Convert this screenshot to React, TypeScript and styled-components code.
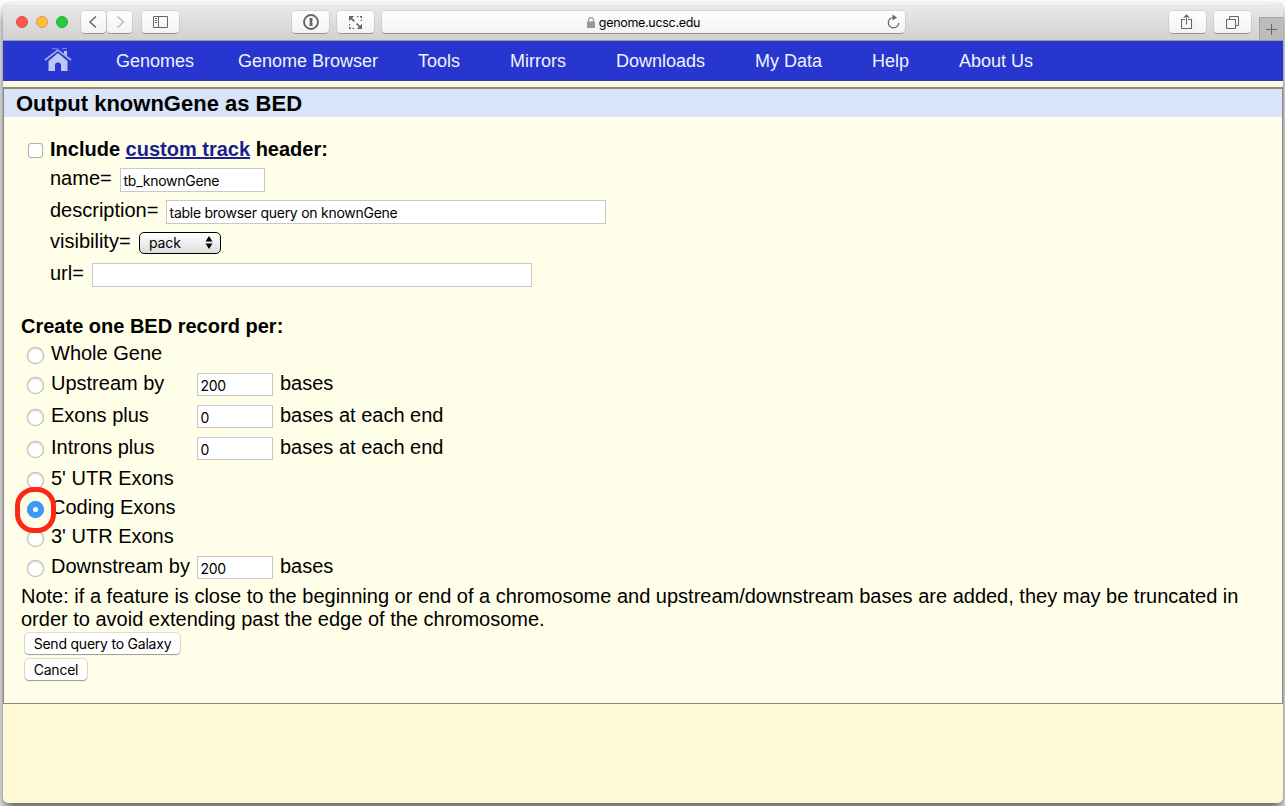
import React from "react";
import styled, { createGlobalStyle } from "styled-components";

const GlobalStyle = createGlobalStyle`
  * { box-sizing: border-box; }
  html, body { margin: 0; height: 100%; overflow: hidden; }
  body { background: #fff; font-family: "Liberation Sans", Arial, sans-serif; color: #000; }
`;

const Desktop = styled.div`
  height: 806px;
  padding: 3px 2px 3px 3px;
  overflow: hidden;
`;

const Window = styled.div`
  height: 800px;
  border-radius: 5px;
  overflow: hidden;
  display: flex;
  flex-direction: column;
  background: #fff8d7;
  box-shadow: 0 0 1px rgba(0, 0, 0, 0.4), 0 9px 14px rgba(0, 0, 0, 0.6);
`;

const Toolbar = styled.div`
  height: 38px;
  flex: none;
  display: flex;
  align-items: center;
  padding-left: 13px;
  background: linear-gradient(#ebeaeb, #d2d1d2);
  border-top: 1px solid #f6f6f6;
  border-bottom: 1px solid #9c9c9c;
`;

const Light = styled.span<{ $color: string; $edge: string }>`
  width: 12px;
  height: 12px;
  margin-right: 8px;
  border-radius: 50%;
  background: ${(p) => p.$color};
  border: 1px solid ${(p) => p.$edge};
`;

const ToolButton = styled.span<{ $width: number; $before: number }>`
  width: ${(p) => p.$width}px;
  margin-left: ${(p) => p.$before}px;
  height: 22px;
  flex: none;
  display: flex;
  align-items: center;
  justify-content: center;
  border-radius: 4px;
  background: linear-gradient(#fefefe, #f3f3f3);
  box-shadow: 0 0 0 0.5px rgba(0, 0, 0, 0.14), 0 1px 0.5px rgba(0, 0, 0, 0.25);
`;

const Address = styled(ToolButton)`
  position: relative;
  font: 12.5px Inter, sans-serif;
  letter-spacing: -0.3px;
  gap: 4px;
`;

const Reload = styled.svg`
  position: absolute;
  right: 5px;
  top: 3px;
`;

const NewTab = styled.span`
  width: 24px;
  height: 23px;
  margin-left: auto;
  align-self: flex-end;
  display: flex;
  align-items: center;
  justify-content: center;
  background: #bdbcbd;
  border-left: 1px solid #a3a3a3;
  border-top: 1px solid #a3a3a3;
`;

const Nav = styled.nav`
  height: 40px;
  flex: none;
  display: flex;
  padding-left: 41px;
  background: #2636cf;
  color: #f1f2fc;
  font-size: 18px;
  line-height: 40px;
`;

const HomeLink = styled.span`
  width: 72px;
  padding-top: 7px;
  line-height: 0;
`;

const NavItem = styled.span<{ $width: number }>`
  width: ${(p) => p.$width}px;
  white-space: nowrap;
`;

const Panel = styled.main`
  height: 617px;
  margin-top: 6px;
  flex: none;
  background: #fffee8;
  border: 1px solid #888;
  border-top-width: 2px;
`;

const Title = styled.h1`
  margin: 0;
  height: 28px;
  padding-left: 12px;
  background: #d9e4f8;
  font-size: 22px;
  line-height: 30px;
`;

const Form = styled.div`
  padding: 21px 0 0 17px;
  font-size: 20px;
  line-height: 22px;
`;

const Row = styled.div<{ $height: number }>`
  height: ${(p) => p.$height}px;
  display: flex;
  align-items: flex-start;
  white-space: pre;
`;

const Marker = styled.span<{ $width?: number }>`
  width: ${(p) => p.$width ?? 29}px;
  flex: none;
  padding: 5px 0 0 6px;
  position: relative;
`;

const Check = styled.span`
  display: block;
  width: 15px;
  height: 15px;
  margin-left: 1px;
  background: #fff;
  border: 1px solid #b4b4b0;
  border-radius: 3px;
  box-shadow: 0 0 1px rgba(0, 0, 0, 0.2);
`;

const Radio = styled.span<{ $on?: boolean }>`
  display: flex;
  align-items: center;
  justify-content: center;
  width: 17px;
  height: 17px;
  border-radius: 50%;
  background: ${(p) => (p.$on ? "#3b99fc" : "#fff")};
  border: 1px solid ${(p) => (p.$on ? "#3f93ec" : "#bdbdb8")};
  box-shadow: 0 0 1px rgba(0, 0, 0, 0.25)${(p) => (p.$on ? "" : ", inset 0 1px 1px rgba(0, 0, 0, 0.16)")};
  &::after {
    content: "";
    width: 5px;
    height: 5px;
    border-radius: 50%;
    background: #fff;
  }
`;

const Highlight = styled.span`
  position: absolute;
  z-index: 1;
  left: -6px;
  top: -9px;
  width: 41px;
  height: 46px;
  border: 5px solid #fe2713;
  border-radius: 19px;
`;

const Label = styled.span<{ $width?: number }>`
  width: ${(p) => (p.$width ? p.$width + "px" : "auto")};
  flex: none;
`;

const Anchor = styled.a`
  color: #181f90;
  text-decoration: underline;
`;

const Field = styled.span<{ $width: number; $height: number }>`
  width: ${(p) => p.$width}px;
  height: ${(p) => p.$height}px;
  margin-top: 1px;
  padding: 1px 0 0 2.5px;
  flex: none;
  background: #fff;
  border: 1px solid #c8c8c8;
  font: 14px/21px Inter, sans-serif;
  letter-spacing: -0.26px;
`;

const Select = styled.span`
  width: 82px;
  height: 22px;
  margin-top: 2px;
  padding: 0 7px 1px 9px;
  display: flex;
  align-items: center;
  justify-content: space-between;
  border: 1px solid #000;
  border-radius: 5px;
  background: linear-gradient(#fff, #dedede);
  font: 14px/19px Inter, sans-serif;
  letter-spacing: -0.1px;
`;

const Unit = styled.span`
  margin-left: 7px;
`;

const Note = styled.p`
  margin: 0;
  line-height: 23px;
  white-space: pre;
`;

const PushButton = styled.span<{ $width: number }>`
  display: flex;
  align-items: center;
  justify-content: center;
  width: ${(p) => p.$width}px;
  height: 21px;
  margin: 2px 0 5px 4px;
  border-radius: 4px;
  background: #fff;
  box-shadow: 0 0 0 1px rgba(0, 0, 0, 0.13), 0 1px 1px rgba(0, 0, 0, 0.3);
  font: 14px Inter, sans-serif;
  letter-spacing: -0.22px;
`;

const navItems: [string, number][] = [
  ["Genomes", 122],
  ["Genome Browser", 180],
  ["Tools", 92],
  ["Mirrors", 106],
  ["Downloads", 139],
  ["My Data", 117],
  ["Help", 87],
  ["About Us", 90],
];

type Option = { label: string; height: number; value?: string; unit?: string; on?: boolean };
const options: Option[] = [
  { label: "Whole Gene", height: 30 },
  { label: "Upstream by", height: 32, value: "200", unit: "bases" },
  { label: "Exons plus", height: 32, value: "0", unit: "bases at each end" },
  { label: "Introns plus", height: 31, value: "0", unit: "bases at each end" },
  { label: "5' UTR Exons", height: 29 },
  { label: "Coding Exons", height: 29, on: true },
  { label: "3' UTR Exons", height: 30 },
  { label: "Downstream by", height: 30, value: "200", unit: "bases" },
];

const line = { fill: "none", stroke: "#666", strokeWidth: 1.2 };

export default function App() {
  return (
    <Desktop>
      <GlobalStyle />
      <Window>
        <Toolbar>
          <Light $color="#fc5753" $edge="#df4744" />
          <Light $color="#fdbc40" $edge="#de9f34" />
          <Light $color="#29c940" $edge="#20ad32" />
          <ToolButton $width={25} $before={5}>
            <svg width="12" height="14" viewBox="0 0 12 14"><path d="M8 1.500 2 7l6 5.500" {...line} strokeWidth={1.500} /></svg>
          </ToolButton>
          <ToolButton $width={25} $before={1}>
            <svg width="10" height="14" viewBox="0 0 10 14"><path d="M2.500 1.500 8.500 7l-6 5.500" {...line} stroke="#bbb" strokeWidth={1.500} /></svg>
          </ToolButton>
          <ToolButton $width={37} $before={10}>
            <svg width="15" height="12" viewBox="0 0 15 12"><path d="M.5.5h14v11H.5zM5.500.5v11M2 2.500h2M2 4.500h2M2 6.500h2" {...line} strokeWidth={1} /></svg>
          </ToolButton>
          <ToolButton $width={37} $before={113}>
            <svg width="16" height="16" viewBox="0 0 16 16">
              <circle cx="8" cy="8" r="7" {...line} strokeWidth={1.900} />
              <path d="M6.500 4h3v3.200l-.7.8.7.8V12h-3V8.800l.7-.8-.7-.8z" fill="#666" />
            </svg>
          </ToolButton>
          <ToolButton $width={37} $before={8}>
            <svg width="13" height="13" viewBox="0 0 13 13">
              <path d="M8 .6h1.500M11 .6h1.400V2M12.400 3.500V5M.6 8v1.500M.6 11v1.400H2M3.500 12.400H5" {...line} />
              <path d="M2 2l3.300 3.300M7.700 7.700 11 11" {...line} strokeWidth={1.700} />
              <path d="M0 0h5.200L0 5.200zM13 13H7.800L13 7.800z" fill="#666" />
            </svg>
          </ToolButton>
          <Address $width={523} $before={8}>
            <svg width="8" height="11" viewBox="0 0 8 11">
              <path d="M0 4.500h8V11H0z" fill="#999" />
              <path d="M1.600 5V2.800a2.400 2.200 0 0 1 4.800 0V5" fill="none" stroke="#999" strokeWidth="1.100" />
            </svg>
            <span>genome.ucsc.edu</span>
            <Reload width="14" height="15" viewBox="0 0 14 15">
              <path d="M7.500 3.500a5.200 5.200 0 1 0 5.200 5.200" {...line} />
              <path d="M6.500.5 11 3.500 6.500 6.500z" fill="#666" />
            </Reload>
          </Address>
          <ToolButton $width={37} $before={264}>
            <svg width="13" height="16" viewBox="0 0 13 16"><path d="M4 5.500H.5v9h10v-9H7M5.500 10.500V1M2.800 3.700 5.500 1l2.700 2.700" {...line} strokeWidth={1.100} /></svg>
          </ToolButton>
          <ToolButton $width={37} $before={8}>
            <svg width="13" height="13" viewBox="0 0 13 13"><path d="M.5 3.500h9v9h-9zM3.500 3V.5h9v9H10" {...line} strokeWidth={1} /></svg>
          </ToolButton>
          <NewTab>
            <svg width="11" height="11" viewBox="0 0 11 11"><path d="M5.500 0v11M0 5.500h11" {...line} strokeWidth={1} /></svg>
          </NewTab>
        </Toolbar>
        <Nav>
          <HomeLink>
            <svg width="28" height="24" viewBox="0 0 28 24">
              <path d="M4.500 13 14 5l9.500 8v10H17v-6a3 2.500 0 0 0-6 0v6H4.500z" fill="#c0c5f2" />
              <path d="M1 12 14 2.200 27 12" fill="none" stroke="#a9b0ee" strokeWidth="1.600" />
              <path d="M20 3h3v5l-3-2.200z" fill="#c0c5f2" />
              <path d="M8 .8h6M18 .8h5" stroke="#8b94e6" />
            </svg>
          </HomeLink>
          {navItems.map(([name, width]) => (
            <NavItem key={name} $width={width}>{name}</NavItem>
          ))}
        </Nav>
        <Panel>
          <Title>Output knownGene as BED</Title>
          <Form>
            <Row $height={29}>
              <Marker><Check /></Marker>
              <b>Include <Anchor>custom track</Anchor> header:</b>
            </Row>
            <Row $height={32}>
              <Marker />
              <Label $width={70}>name=</Label>
              <Field $width={145} $height={24}>tb_knownGene</Field>
            </Row>
            <Row $height={31}>
              <Marker />
              <Label $width={116}>description=</Label>
              <Field $width={440} $height={24}>table browser query on knownGene</Field>
            </Row>
            <Row $height={32}>
              <Marker />
              <Label $width={89}>visibility=</Label>
              <Select>
                pack
                <svg width="8" height="13" viewBox="0 0 8 13"><path d="M4 0l3.500 5.500h-7zM4 13 .5 7.500h7z" /></svg>
              </Select>
            </Row>
            <Row $height={53}>
              <Marker />
              <Label $width={42}>url=</Label>
              <Field $width={440} $height={24} />
            </Row>
            <Row $height={27}><b>Create one BED record per:</b></Row>
            {options.map((o) => (
              <Row key={o.label} $height={o.height}>
                <Marker $width={30}>
                  <Radio $on={o.on} />
                  {o.on && <Highlight />}
                </Marker>
                <Label $width={146}>{o.label}</Label>
                {o.value && <Field $width={76} $height={23}>{o.value}</Field>}
                {o.unit && <Unit>{o.unit}</Unit>}
              </Row>
            ))}
            <Note>
              {"Note: if a feature is close to the beginning or end of a chromosome and upstream/downstream bases are added, they may be truncated in\norder to avoid extending past the edge of the chromosome."}
            </Note>
            <PushButton $width={155}>Send query to Galaxy</PushButton>
            <PushButton $width={62}>Cancel</PushButton>
          </Form>
        </Panel>
      </Window>
    </Desktop>
  );
}
